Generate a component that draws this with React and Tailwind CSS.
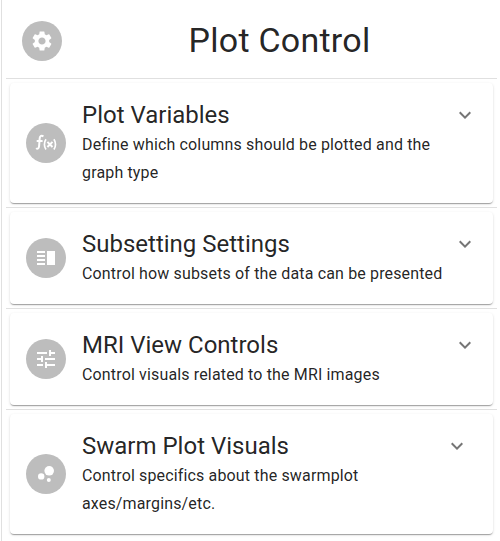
import { MdBubbleChart, MdExpandMore, MdSettings, MdTune, MdVerticalSplit } from 'react-icons/md';

function FunctionIcon() {
  return (
    <svg viewBox="0 0 24 24" className="size-6" fill="none" stroke="currentColor" strokeWidth="2">
      <path d="M9.4 5.5C7.6 4 5.9 5 5.7 7.2L5.1 15C4.9 17.6 3.5 18.4 2.2 17.1M2.7 10H8.6" />
      <path d="M12 8.3C9.9 11.2 9.9 15.6 12 18.5M19.9 8.3C22 11.2 22 15.6 19.9 18.5" strokeWidth="1.7" />
      <path d="M13.4 10.9L18.5 16M18.5 10.9L13.4 16" />
    </svg>
  );
}

const panels = [
  { title: 'Plot Variables', text: 'Define which columns should be plotted and the graph type', icon: <FunctionIcon />, inset: '' },
  { title: 'Subsetting Settings', text: 'Control how subsets of the data can be presented', icon: <MdVerticalSplit className="size-6" />, inset: '' },
  { title: 'MRI View Controls', text: 'Control visuals related to the MRI images', icon: <MdTune className="size-6" />, inset: '' },
  { title: 'Swarm Plot Visuals', text: 'Control specifics about the swarmplot axes/margins/etc.', icon: <MdBubbleChart className="size-6" />, inset: 'mr-2' },
];

function Avatar({ children }) {
  return (
    <div className="flex size-10 shrink-0 items-center justify-center rounded-full bg-[#bdbdbd] text-white">
      {children}
    </div>
  );
}

function Panel({ title, text, icon, inset }) {
  return (
    <section className="mx-1 my-1 flex items-center rounded bg-white p-4 shadow-[0_2px_1px_-1px_rgba(0,0,0,0.2),0_1px_1px_0_rgba(0,0,0,0.14),0_1px_3px_0_rgba(0,0,0,0.12)]">
      <Avatar>{icon}</Avatar>
      <div className="ml-4 min-w-0 flex-1">
        <h2 className="text-2xl leading-8">{title}</h2>
        <p className="text-base leading-7 tracking-[0.00938em]">{text}</p>
      </div>
      <MdExpandMore className={`mt-1 size-6 shrink-0 self-start text-black/54 ${inset}`} />
    </section>
  );
}

export default function App() {
  return (
    <div className="h-[541px] w-[500px] overflow-hidden bg-white pl-px font-[Roboto,sans-serif] text-black/87">
      <main className="h-full border-l border-[#e0e0e0] pr-[3px] pl-1">
        <header className="flex h-[78px] items-center pt-1 pl-4">
          <Avatar><MdSettings className="size-6" /></Avatar>
          <h1 className="flex-1 pb-0.5 text-center text-[34px] leading-[42px] tracking-[0.00735em]">Plot Control</h1>
        </header>
        {panels.map((p) => (
          <div key={p.title} className="flow-root border-t border-black/12">
            <Panel {...p} />
          </div>
        ))}
      </main>
    </div>
  );
}
